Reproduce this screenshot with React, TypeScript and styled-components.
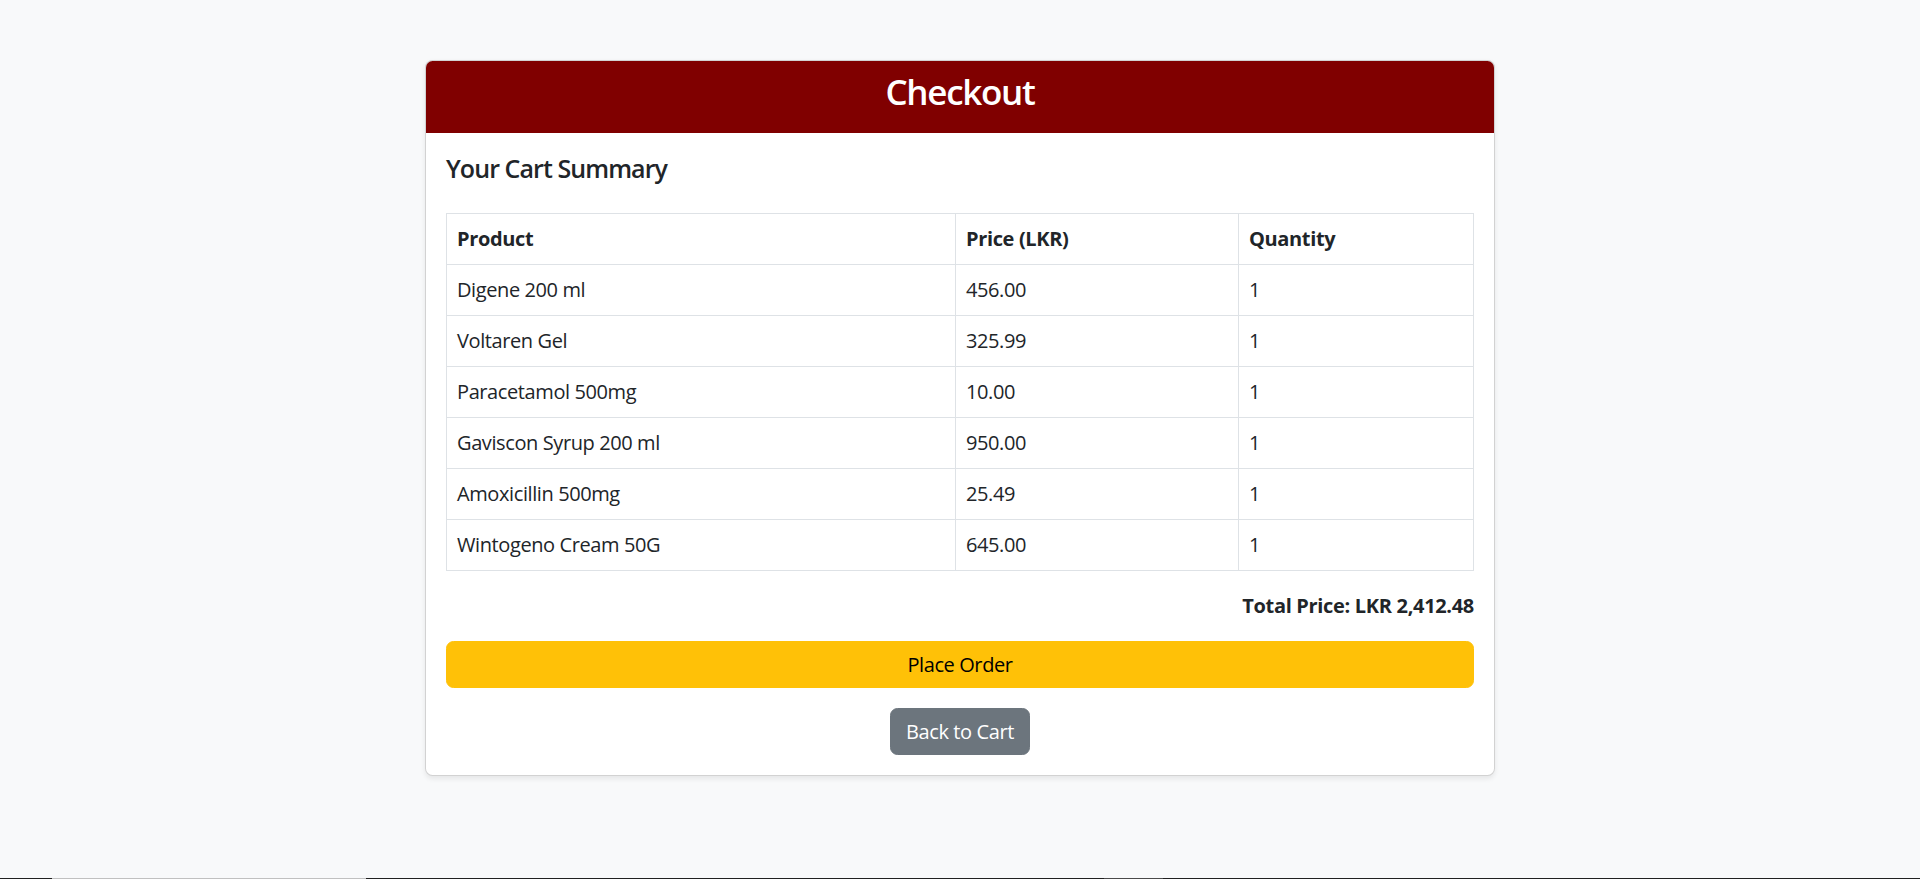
import React from "react";
import styled, { createGlobalStyle } from "styled-components";

const GlobalStyle = createGlobalStyle`
  html, body { margin: 0; padding: 0; background: #f8f9fa; }
  body {
    font-family: "Open Sans", "Noto Sans", sans-serif;
    color: #212529;
    letter-spacing: -0.025em;
  }
  *, *::before, *::after { box-sizing: border-box; }
`;

const Page = styled.main`
  min-height: 879px;
  display: flex;
  justify-content: center;
  align-items: flex-start;
  padding-top: 60px;
`;

const Card = styled.section`
  width: 1070px;
  background: #fff;
  border: 1px solid rgba(0, 0, 0, 0.175);
  border-radius: 7.5px;
  box-shadow: 0 2.5px 5px rgba(0, 0, 0, 0.075);
  overflow: hidden;
`;

const CardHeader = styled.header`
  background: #800000;
  color: #fff;
  height: 72px;
  padding: 10px 20px 20px;
  text-align: center;
`;

const Title = styled.h3`
  margin: 0;
  font-size: 35px;
  line-height: 42px;
  font-weight: 600;
  letter-spacing: -0.037em;
`;

const CardBody = styled.div`
  padding: 20px;
  display: flex;
  flex-direction: column;
`;

const Subtitle = styled.h5`
  margin: 0 0 30px;
  font-size: 25px;
  line-height: 30px;
  font-weight: 600;
  letter-spacing: -0.037em;
`;

const Table = styled.table`
  width: 100%;
  border-collapse: collapse;
  margin-bottom: 20px;
  font-size: 20px;
  line-height: 30px;
`;

const Cell = styled.td<{ $w?: number }>`
  border: 1px solid #dee2e6;
  padding: 10px;
  text-align: left;
  width: ${(p) => (p.$w ? `${p.$w}px` : "auto")};
`;

const HeadCell = styled(Cell).attrs({ as: "th" })`
  font-weight: 700;
  letter-spacing: -0.018em;
`;

const Total = styled.p`
  margin: 0 0 20px;
  text-align: right;
  font-size: 20px;
  line-height: 30px;
  font-weight: 700;
  letter-spacing: -0.016em;
`;

const Button = styled.button<{ $variant: "warning" | "secondary"; $block?: boolean }>`
  font-family: inherit;
  letter-spacing: inherit;
  font-size: 20px;
  line-height: 30px;
  padding: 7.5px 15px;
  border-radius: 7.5px;
  cursor: pointer;
  width: ${(p) => (p.$block ? "100%" : "auto")};
  background: ${(p) => (p.$variant === "warning" ? "#ffc107" : "#6c757d")};
  border: 1px solid ${(p) => (p.$variant === "warning" ? "#ffc107" : "#6c757d")};
  color: ${(p) => (p.$variant === "warning" ? "#000" : "#fff")};
`;

const Center = styled.div`
  display: flex;
  justify-content: center;
  margin-top: 20px;
`;

const BottomEdge = styled.div`
  position: fixed;
  left: 0;
  right: 0;
  bottom: 0;
  height: 1px;
  background: linear-gradient(
    to right,
    #202020 0,
    #202020 52px,
    #c0c0c0 52px,
    #c0c0c0 366px,
    #202020 366px,
    #202020 1104px,
    #4a4a4a 1104px,
    #4a4a4a 1163px,
    #202020 1163px
  );
`;

const items = [
  { name: "Digene 200 ml", price: "456.00", qty: 1 },
  { name: "Voltaren Gel", price: "325.99", qty: 1 },
  { name: "Paracetamol 500mg", price: "10.00", qty: 1 },
  { name: "Gaviscon Syrup 200 ml", price: "950.00", qty: 1 },
  { name: "Amoxicillin 500mg", price: "25.49", qty: 1 },
  { name: "Wintogeno Cream 50G", price: "645.00", qty: 1 },
];

export default function App() {
  return (
    <>
      <GlobalStyle />
      <Page>
        <Card>
          <CardHeader>
            <Title>Checkout</Title>
          </CardHeader>
          <CardBody>
            <Subtitle>Your Cart Summary</Subtitle>
            <Table>
              <thead>
                <tr>
                  <HeadCell $w={509}>Product</HeadCell>
                  <HeadCell $w={283}>Price (LKR)</HeadCell>
                  <HeadCell>Quantity</HeadCell>
                </tr>
              </thead>
              <tbody>
                {items.map((it) => (
                  <tr key={it.name}>
                    <Cell>{it.name}</Cell>
                    <Cell>{it.price}</Cell>
                    <Cell>{it.qty}</Cell>
                  </tr>
                ))}
              </tbody>
            </Table>
            <Total>Total Price: LKR 2,412.48</Total>
            <Button $variant="warning" $block>
              Place Order
            </Button>
            <Center>
              <Button $variant="secondary">Back to Cart</Button>
            </Center>
          </CardBody>
        </Card>
      </Page>
      <BottomEdge />
    </>
  );
}
